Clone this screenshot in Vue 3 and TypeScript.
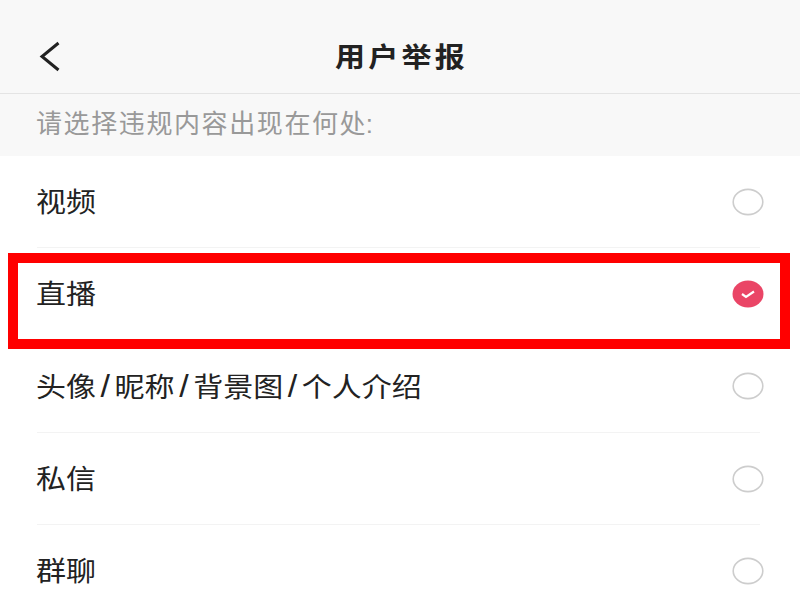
<template>
  <div class="page">
    <header class="nav">
      <button class="back" aria-label="返回">
        <svg width="24" height="32" viewBox="0 0 24 32">
          <path d="M21.5 2 L5 15.5 L21.5 29" fill="none" stroke="#222" stroke-width="3" />
        </svg>
      </button>
      <div class="title">用户举报</div>
    </header>
    <div class="hint">请选择违规内容出现在何<span class="tight">处</span>:</div>
    <ul class="list">
      <li v-for="item in items" :key="item" class="row">
        <span class="label">
          <template v-for="(part, i) in item.split('/')" :key="part">
            <span v-if="i > 0" class="sep">/</span>{{ part }}
          </template>
        </span>
        <svg class="radio" width="32" height="28" viewBox="0 0 32 28">
          <template v-if="item === selected">
            <ellipse cx="16" cy="14" rx="15.5" ry="13.5" fill="#ea4566" />
            <path d="M10 14 L14 17 L22 11.5" fill="none" stroke="#fff" stroke-width="2.2" />
          </template>
          <ellipse v-else cx="16" cy="14" rx="14.8" ry="12.6" fill="#fff" stroke="#cdcdcd" stroke-width="1.6" />
        </svg>
      </li>
    </ul>
    <div class="highlight"></div>
  </div>
</template>

<script setup lang="ts">
const items: string[] = ['视频', '直播', '头像/昵称/背景图/个人介绍', '私信', '群聊']
const selected = '直播'
</script>

<style>
html,
body {
  margin: 0;
  overflow: hidden;
  background: #fff;
}
</style>

<style scoped>
.page {
  position: relative;
  width: 800px;
  height: 600px;
  overflow: hidden;
  background: #fff;
  color: #222;
  font-family: "Liberation Sans", "Noto Sans CJK SC", sans-serif;
}

.nav {
  position: relative;
  display: flex;
  align-items: center;
  justify-content: center;
  box-sizing: border-box;
  height: 94px;
  padding-top: 17px;
  background: #f8f8f8;
  border-bottom: 1px solid #e4e4e4;
}

.back {
  position: absolute;
  left: 37px;
  top: 41px;
  padding: 0;
  border: 0;
  background: none;
  line-height: 0;
}

.title {
  font-size: 30px;
  font-weight: 700;
  letter-spacing: 3.3px;
  margin-right: -3px;
  color: #222;
  transform: scaleY(0.92);
}

.hint {
  height: 62px;
  padding: 0 36px;
  line-height: 60px;
  background: #f8f8f8;
  color: #999;
  font-size: 26px;
  letter-spacing: 1.6px;
}

.tight {
  letter-spacing: 0;
}

.list {
  margin: 0;
  padding: 0;
  list-style: none;
}

.row {
  display: flex;
  align-items: center;
  justify-content: space-between;
  box-sizing: border-box;
  height: 92.3px;
  margin: 0 40px 0 37px;
  border-bottom: 1px solid #f3f3f3;
}

.label {
  margin: 0 0 3px -1px;
  font-size: 30px;
  color: #222;
  transform: scaleY(0.9);
}

.sep {
  display: inline-block;
  width: 18.6px;
  font-size: 34px;
  font-weight: 300;
  line-height: 1;
  text-align: center;
}

.radio {
  margin-right: -4px;
}

.highlight {
  position: absolute;
  left: 8px;
  top: 253px;
  width: 782px;
  height: 96px;
  box-sizing: border-box;
  border: 10px solid #ff0000;
}
</style>
